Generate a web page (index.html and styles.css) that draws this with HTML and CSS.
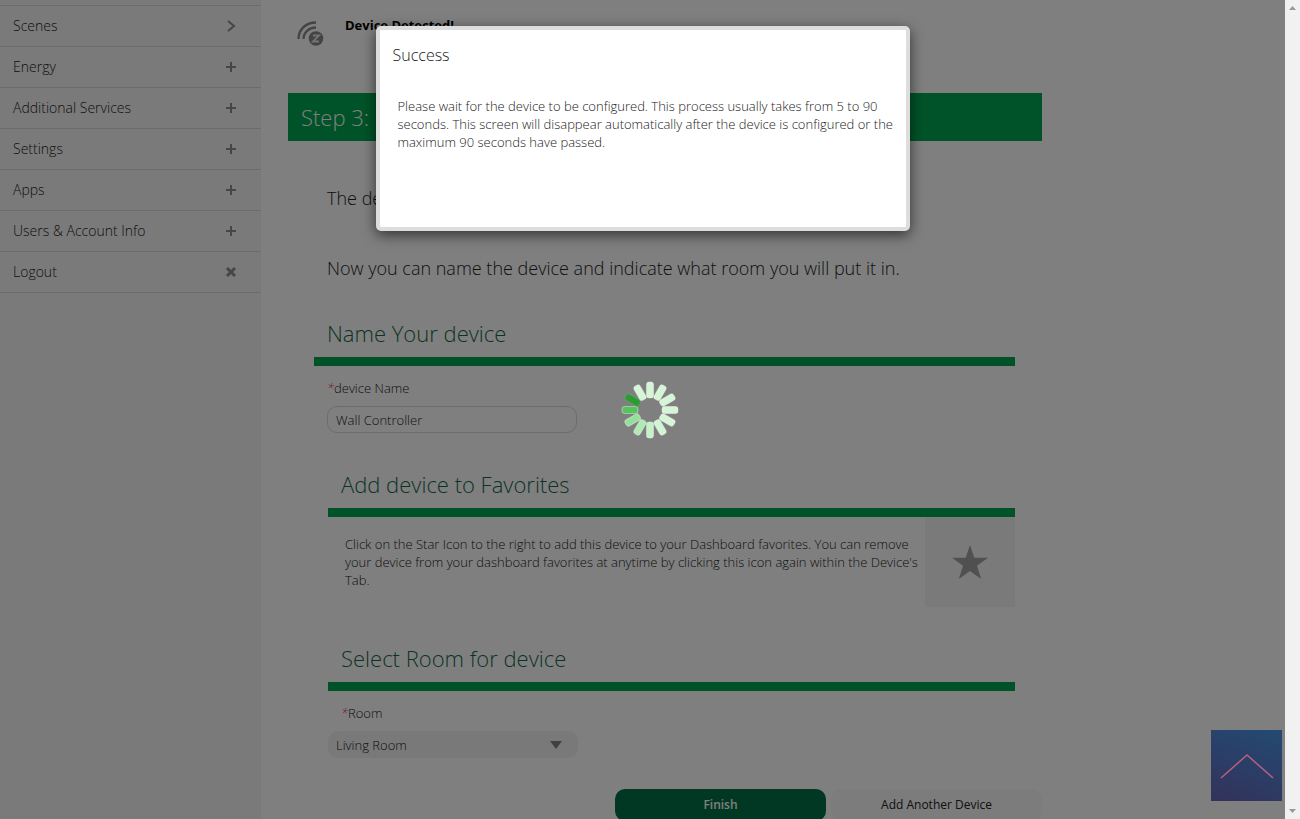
FILE: index.html
```html
<!DOCTYPE html>
<html lang="en">
<head>
<meta charset="utf-8">
<title>Add Device</title>
<link rel="stylesheet" href="styles.css">
</head>
<body>
<div class="app">
  <nav class="sidebar">
    <ul>
      <li><a href="#">Scenes <svg width="12" height="12" viewBox="0 0 12 12"><path d="M3 1l6 5-6 5"/></svg></a></li>
      <li><a href="#">Energy <svg width="12" height="12" viewBox="0 0 12 12"><path d="M6 1v10M1 6h10"/></svg></a></li>
      <li><a href="#">Additional Services <svg width="12" height="12" viewBox="0 0 12 12"><path d="M6 1v10M1 6h10"/></svg></a></li>
      <li><a href="#">Settings <svg width="12" height="12" viewBox="0 0 12 12"><path d="M6 1v10M1 6h10"/></svg></a></li>
      <li><a href="#">Apps <svg width="12" height="12" viewBox="0 0 12 12"><path d="M6 1v10M1 6h10"/></svg></a></li>
      <li><a href="#">Users &amp; Account Info <svg width="12" height="12" viewBox="0 0 12 12"><path d="M6 1v10M1 6h10"/></svg></a></li>
      <li><a href="#">Logout <svg class="close" width="12" height="12" viewBox="0 0 12 12"><path d="M2 2l8 8M10 2l-8 8"/></svg></a></li>
    </ul>
  </nav>
  <main class="content">
    <div class="detected">
      <svg width="28" height="28" viewBox="0 0 28 28">
        <g fill="none" stroke="#888" stroke-width="2.4">
          <path d="M1.5 19C1.5 9.500 9 2.500 19 2.500"/>
          <path d="M6.500 19C6.500 12.500 12 7.500 19 7.500"/>
        </g>
        <circle cx="19" cy="18.500" r="7.300" fill="#888"/>
        <path d="M16 15.500h6l-6 6h6" fill="none" stroke="#e8e8e8" stroke-width="1.800"/>
      </svg>
      <strong>Device Detected!</strong>
    </div>
    <h1 class="step">Step 3:</h1>
    <p class="lead">The device</p>
    <p class="lead">Now you can name the device and indicate what room you will put it in.</p>

    <form action="#" method="get">
      <section class="wide">
        <h2>Name Your device</h2>
        <label for="name"><i>*</i>device Name</label>
        <input type="text" id="name" name="name" value="Wall Controller">
      </section>

      <section class="favorites">
        <h2>Add device to Favorites</h2>
        <div class="fav">
          <p>Click on the Star Icon to the right to add this device to your Dashboard favorites. You can remove your device from your dashboard favorites at anytime by clicking this icon again within the Device's Tab.</p>
          <button type="button" class="star" aria-label="Favorite">
            <svg width="36" height="34" viewBox="0 0 36 34"><path d="M18 0l4.300 12.700H36L25 20.800 29.200 34 18 26 6.800 34 11 20.800 0 12.700h13.700z" fill="#a0a0a0"/></svg>
          </button>
        </div>
      </section>

      <section class="room">
        <h2>Select Room for device</h2>
        <label for="room"><i>*</i>Room</label>
        <div class="select">
          <select id="room" name="room"><option>Living Room</option></select>
          <svg width="12" height="8" viewBox="0 0 12 8"><path d="M0 0h12L6 8z" fill="#808080"/></svg>
        </div>
      </section>

      <div class="actions">
        <button type="submit" class="finish">Finish</button>
        <button type="button">Add Another Device</button>
      </div>
    </form>
  </main>

  <div class="overlay"></div>
  <div class="modal" role="dialog" aria-labelledby="modal-title">
    <h3 id="modal-title">Success</h3>
    <p>Please wait for the device to be configured. This process usually takes from 5 to 90 seconds. This screen will disappear automatically after the device is configured or the maximum 90 seconds have passed.</p>
  </div>
  <a class="to-top" href="#" aria-label="Back to top">
    <svg width="54" height="26" viewBox="0 0 54 26"><path d="M1 25L27 2l26 23" fill="none" stroke="#b8607e" stroke-width="1.500"/></svg>
  </a>
</div>

<div class="scrollbar">
  <svg width="7" height="4" viewBox="0 0 7 4"><path d="M0 4h7L3.500 0z"/></svg>
  <svg width="7" height="4" viewBox="0 0 7 4"><path d="M0 0h7L3.500 4z"/></svg>
</div>

<svg class="spinner" width="60" height="60" viewBox="-30 -30 60 60" stroke="#fff" stroke-opacity=".4">
  <rect x="-3.5" y="-28" width="7" height="16" rx="2.500" fill="#d4f5d6"/>
  <rect x="-3.5" y="-28" width="7" height="16" rx="2.500" fill="#d4f5d6" transform="rotate(30)"/>
  <rect x="-3.5" y="-28" width="7" height="16" rx="2.500" fill="#d4f5d6" transform="rotate(60)"/>
  <rect x="-3.5" y="-28" width="7" height="16" rx="2.500" fill="#d4f5d6" transform="rotate(90)"/>
  <rect x="-3.5" y="-28" width="7" height="16" rx="2.500" fill="#d4f5d6" transform="rotate(120)"/>
  <rect x="-3.5" y="-28" width="7" height="16" rx="2.500" fill="#d0f5d2" transform="rotate(150)"/>
  <rect x="-3.5" y="-28" width="7" height="16" rx="2.500" fill="#c2f2c6" transform="rotate(180)"/>
  <rect x="-3.5" y="-28" width="7" height="16" rx="2.500" fill="#aeeab2" transform="rotate(210)"/>
  <rect x="-3.5" y="-28" width="7" height="16" rx="2.500" fill="#92e09a" transform="rotate(240)"/>
  <rect x="-3.5" y="-28" width="7" height="16" rx="2.500" fill="#57c35c" transform="rotate(270)"/>
  <rect x="-3.5" y="-28" width="7" height="16" rx="2.500" fill="#2f9a35" stroke="#5cc062" transform="rotate(300)"/>
  <rect x="-3.5" y="-28" width="7" height="16" rx="2.500" fill="#d4f5d6" transform="rotate(330)"/>
</svg>
</body>
</html>
```

FILE: styles.css
```css
* { box-sizing: border-box; }

body
{
    margin: 0;
    display: flex;
    height: 100vh;
    overflow: hidden;
    font: 300 13px/18px "Open Sans", sans-serif;
    color: #222;
    background: #fff;
}

h1, h2, h3, p, ul { margin: 0; padding: 0; font-weight: 300; }

button, input, select { font: inherit; color: inherit; }

.app
{
    position: relative;
    flex: 1;
    display: flex;
    overflow: hidden;
}

/* left menu */
.sidebar
{
    width: 261px;
    flex: none;
    padding-top: 5px;
    background: #f5f5f5;
}

.sidebar ul
{
    list-style: none;
    border-top: 1px solid #d8d8d8;
}

.sidebar li { border-bottom: 1px solid #d8d8d8; }

.sidebar a
{
    display: flex;
    align-items: center;
    justify-content: space-between;
    height: 40px;
    padding: 0 24px 0 13px;
    font-size: 14px;
    color: #222;
    text-decoration: none;
}

.sidebar svg { fill: none; stroke: #8c8c8c; stroke-width: 2; }
.sidebar .close { stroke-width: 3; }

/* wizard */
.content
{
    flex: 1;
    max-width: 781px;
    padding: 16px 0 0 27px;
}

.detected
{
    display: flex;
    gap: 20px;
    height: 77px;
    padding-left: 9px;
}

.detected svg { margin-top: 4px; }
.detected strong { font-weight: 700; color: #000; }

.step
{
    height: 48px;
    margin-bottom: 40px;
    padding-left: 13px;
    font-size: 22px;
    line-height: 48px;
    color: #fff;
    background: #00a651;
}

.lead
{
    margin-bottom: 36px;
    padding-left: 39px;
    font-size: 18px;
    line-height: 34px;
}

.lead + .lead { margin-bottom: 32px; }

section { margin: 0 27px 0 40px; }
section.wide { margin-left: 26px; }

h2
{
    margin-bottom: 13px;
    padding: 0 13px 8px;
    font-size: 22px;
    line-height: 32px;
    color: #17694a;
    border-bottom: 9px solid #00a651;
}

label { display: block; padding-left: 13px; }
label i { color: #e3344a; }

input
{
    display: block;
    width: 250px;
    height: 27px;
    margin: 9px 0 0 13px;
    padding: 0 8px;
    border: 1px solid #d8d8d8;
    border-radius: 10px;
    background: #fff;
}

.favorites { padding-top: 35px; }
.favorites h2 { margin-bottom: 0; }
.fav { display: flex; justify-content: space-between; }
.fav p { flex: 1; padding: 18px 5px 0 17px; }

.star
{
    display: flex;
    align-items: center;
    justify-content: center;
    width: 90px;
    height: 90px;
    border: 0;
    background: #f5f5f5;
}

.room { padding-top: 35px; }

.select
{
    position: relative;
    width: 250px;
    margin-top: 9px;
}

.select select
{
    display: block;
    width: 100%;
    height: 27px;
    padding: 0 8px;
    border: 0;
    border-radius: 10px;
    background: #f2f2f2;
    appearance: none;
}

.select svg { position: absolute; top: 10px; right: 16px; }

.actions
{
    display: flex;
    justify-content: flex-end;
    gap: 5px;
    padding-top: 31px;
}

.actions button
{
    width: 211px;
    height: 32px;
    border: 0;
    border-radius: 10px;
    font-size: 12px;
    font-weight: 400;
    background: #f8f8f8;
}

.actions .finish { font-weight: 600; color: #fff; background: #007046; }

/* layers above the page */
.overlay
{
    position: absolute;
    inset: 0;
    background: rgba(0, 0, 0, .5);
}

.modal
{
    position: absolute;
    top: 26px;
    left: 50%;
    width: 534px;
    height: 205px;
    padding: 14px 5px 14px 13px;
    transform: translateX(-50%);
    border: 4px solid #ddd;
    border-radius: 5px;
    background: #fff;
    box-shadow: 0 4px 14px rgba(0, 0, 0, .6);
}

.modal h3
{
    margin-bottom: 31px;
    font-size: 16px;
    line-height: 22px;
}

.modal p { padding-left: 5px; }

.to-top
{
    position: absolute;
    right: 3px;
    bottom: 18px;
    display: flex;
    align-items: center;
    justify-content: center;
    width: 71px;
    height: 71px;
    background: linear-gradient(200deg, #234a73, #33325a);
}

.spinner
{
    position: fixed;
    top: 50%;
    left: 50%;
    margin: -30px 0 0 -30px;
}

.scrollbar
{
    display: flex;
    flex-direction: column;
    align-items: center;
    justify-content: space-between;
    width: 15px;
    padding: 6px 0;
    background: #f1f1f1;
    fill: #999;
}
```
